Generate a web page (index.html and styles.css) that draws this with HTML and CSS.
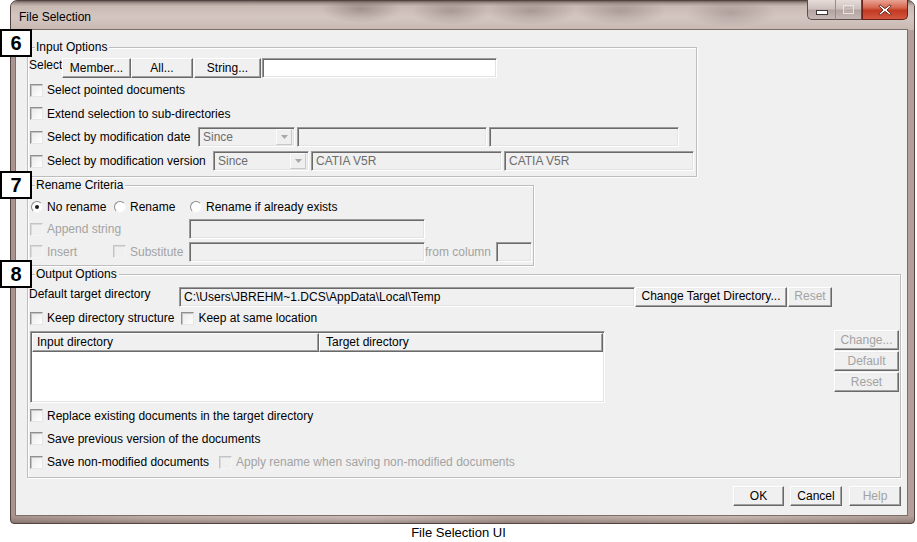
FILE: index.html
```html
<!DOCTYPE html>
<html lang="en">
<head>
<meta charset="utf-8">
<title>File Selection</title>
<link rel="stylesheet" href="styles.css">
</head>
<body>
<div class="page">
  <div class="window">
    <div class="titlebar">
      <span class="title">File Selection</span>
      <div class="capbtns">
        <span class="capbtn cmin"><svg width="12" height="5" viewBox="0 0 12 5"><rect x="0.5" y="0.5" width="11" height="4" fill="#fff" stroke="#3a3636"/></svg></span>
        <span class="capbtn cmax"><svg width="11" height="9" viewBox="0 0 11 9"><rect x="0.5" y="0.5" width="10" height="8" fill="none" stroke="#e9e3e1"/><rect x="2.5" y="2.5" width="6" height="4" fill="none" stroke="#c2b6b2"/></svg></span>
        <span class="capbtn cclose"><svg width="14" height="12" viewBox="0 0 14 12"><path d="M2 0.8 L7 4.6 L12 0.8 L13.2 2 L9 6 L13.2 10 L12 11.2 L7 7.4 L2 11.2 L0.8 10 L5 6 L0.8 2 Z" fill="#fff" stroke="#5a1d16" stroke-width="0.9" stroke-linejoin="round"/></svg></span>
      </div>
    </div>

    <div class="client">
      <section class="group g-input">
        <div class="legend">Input Options</div>
        <div class="row sel-row">
          <span class="sel-lbl">Select</span>
          <button class="btn w-member">Member...</button>
          <button class="btn w-all">All...</button>
          <button class="btn w-string">String...</button>
          <span class="field white w-selstr"></span>
        </div>
        <div class="row h24"><span class="cb"></span><span>Select pointed documents</span></div>
        <div class="row h23"><span class="cb"></span><span>Extend selection to sub-directories</span></div>
        <div class="row h24">
          <span class="cb"></span><span class="lbl-date">Select by modification date</span>
          <span class="combo w-combo1"><span class="ctext">Since</span><span class="carrow"><svg width="7" height="4" viewBox="0 0 7 4"><path d="M0 0 H7 L3.5 4 Z" fill="#a8a8a8"/></svg></span></span>
          <span class="field dis w-f190 ml2"></span>
          <span class="field dis w-f190 ml2"></span>
        </div>
        <div class="row h24">
          <span class="cb"></span><span class="lbl-ver">Select by modification version</span>
          <span class="combo w-combo2"><span class="ctext">Since</span><span class="carrow"><svg width="7" height="4" viewBox="0 0 7 4"><path d="M0 0 H7 L3.5 4 Z" fill="#a8a8a8"/></svg></span></span>
          <span class="field dis w-f191 ml2"><span class="ftext grey">CATIA V5R</span></span>
          <span class="field dis w-f190 ml2"><span class="ftext grey">CATIA V5R</span></span>
        </div>
      </section>

      <section class="group g-rename">
        <div class="legend">Rename Criteria</div>
        <div class="rgrid">
          <div class="gitem"><span class="radio on"></span><span>No rename</span></div>
          <div class="gitem"><span class="radio"></span><span>Rename</span></div>
          <div class="gitem span3"><span class="radio"></span><span>Rename if already exists</span></div>

          <div class="gitem span2 disabled"><span class="cb dcb"></span><span>Append string</span></div>
          <div class="gitem"><span class="field dis fill h20"></span></div>
          <div class="gitem span2"></div>

          <div class="gitem disabled"><span class="cb dcb"></span><span>Insert</span></div>
          <div class="gitem disabled"><span class="cb dcb"></span><span>Substitute</span></div>
          <div class="gitem"><span class="field dis fill h20"></span></div>
          <div class="gitem disabled"><span>from column</span></div>
          <div class="gitem"><span class="field dis fill h20"></span></div>
        </div>
      </section>

      <section class="group g-output">
        <div class="legend">Output Options</div>
        <div class="row dir-row">
          <span class="dir-lbl">Default target directory</span>
          <span class="field dis w-dir"><span class="ftext">C:\Users\JBREHM~1.DCS\AppData\Local\Temp</span></span>
          <button class="btn w-change">Change Target Directory...</button>
          <button class="btn disabled w-reset">Reset</button>
        </div>
        <div class="row h20">
          <span class="cb"></span><span>Keep directory structure</span>
          <span class="cb ml7"></span><span>Keep at same location</span>
        </div>
        <div class="row table-row">
          <div class="table">
            <div class="thead">
              <span class="th th1">Input directory</span>
              <span class="th th2">Target directory</span>
            </div>
          </div>
          <div class="sidebtns">
            <button class="btn disabled w-side">Change...</button>
            <button class="btn disabled w-side">Default</button>
            <button class="btn disabled w-side">Reset</button>
          </div>
        </div>
        <div class="row h23"><span class="cb"></span><span>Replace existing documents in the target directory</span></div>
        <div class="row h23"><span class="cb"></span><span>Save previous version of the documents</span></div>
        <div class="row h24">
          <span class="cb"></span><span class="lbl-save">Save non-modified documents</span>
          <span class="cb dcb ml7"></span><span class="grey-d">Apply rename when saving non-modified documents</span>
        </div>
      </section>

      <div class="footer">
        <button class="btn w-ok">OK</button>
        <button class="btn w-cancel">Cancel</button>
        <button class="btn disabled w-help">Help</button>
      </div>
    </div>
  </div>

  <div class="caption">File Selection UI</div>

  <div class="badge b6">6</div>
  <div class="badge b7">7</div>
  <div class="badge b8">8</div>
</div>
</body>
</html>
```

FILE: styles.css
```css
* { box-sizing: border-box; }

html, body {
  margin: 0;
  padding: 0;
  background: #ffffff;
}

body {
  width: 917px;
  height: 542px;
  overflow: hidden;
  font-family: "Liberation Sans", Arial, sans-serif;
  font-size: 12px;
  color: #000;
}

.page {
  position: relative;
  width: 917px;
  height: 542px;
}

/* ---------- window frame ---------- */
.window {
  margin-left: 10px;
  width: 905px;
  height: 524px;
  display: flex;
  flex-direction: column;
  border: 1px solid #54443f;
  border-radius: 7px 7px 4px 4px;
  padding: 0 7px 8px 5px;
  background:
    linear-gradient(to bottom, rgba(0,0,0,0) 0, rgba(0,0,0,0) 515px, rgba(90,72,68,0.2) 519px, rgba(60,48,45,0.4) 523px),
    linear-gradient(to right, #a8958f 0, #c0aea8 15%, #cfc0bb 40%, #b9a7a1 55%, #cbbab4 80%, #b29f99 100%);
}

.titlebar {
  height: 29px;
  margin: 0 -7px 0 -5px;
  padding-left: 8px;
  display: flex;
  justify-content: space-between;
  align-items: center;
  border-radius: 6px 6px 0 0;
  background:
    radial-gradient(ellipse 40px 14px at 350px 8px, rgba(80,66,62,0.35), rgba(80,66,62,0) 100%),
    radial-gradient(ellipse 40px 14px at 440px 10px, rgba(80,66,62,0.30), rgba(80,66,62,0) 100%),
    radial-gradient(ellipse 45px 14px at 520px 10px, rgba(80,66,62,0.30), rgba(80,66,62,0) 100%),
    radial-gradient(ellipse 45px 14px at 610px 10px, rgba(80,66,62,0.28), rgba(80,66,62,0) 100%),
    radial-gradient(ellipse 45px 14px at 720px 12px, rgba(80,66,62,0.25), rgba(80,66,62,0) 100%),
    linear-gradient(to bottom, #6e605c 0, #a3938e 2px, #c9b9b3 5px, #d3c6c1 16px, #c8b8b2 29px);
}

.title {
  font-size: 12px;
  color: #000;
  margin-top: 3px;
}

.capbtns {
  align-self: flex-start;
  margin-top: -1px;
  margin-right: 6px;
  display: flex;
  height: 20px;
}

.capbtn {
  display: flex;
  align-items: center;
  justify-content: center;
  height: 20px;
  border: 1px solid #5b4e4b;
  border-top: none;
}

.cmin {
  width: 28px;
  border-radius: 0 0 0 5px;
  border-right: none;
  background: linear-gradient(to bottom, #e6dcd9 0, #cfc2be 45%, #b3a4a0 55%, #c6b9b5 100%);
  padding-top: 5px;
}

.cmax {
  width: 27px;
  border-left: 1px solid #9a8c88;
  background: linear-gradient(to bottom, #e6dcd9 0, #cfc2be 45%, #b3a4a0 55%, #c6b9b5 100%);
}

.cclose {
  width: 46px;
  border-radius: 0 0 5px 0;
  border-color: #6b1f17;
  background: linear-gradient(to bottom, #e9a395 0, #d6674f 40%, #c23a22 55%, #d3573f 100%);
}

/* ---------- client area ---------- */
.client {
  flex: none;
  height: 485px;
  background: #f0f0f0;
  box-shadow: 0 0 0 1px #7d6e69;
  padding: 17px 6px 0 11px;
  display: flex;
  flex-direction: column;
}

.group {
  border: 1px solid #bdbdbd;
  box-shadow: inset 1px 1px #ffffff, 1px 1px #ffffff;
  padding: 0 0 3px 2px;
}

.g-input { width: 670px; }
.g-rename { width: 507px; margin-top: 8px; padding-bottom: 2px; }
.g-output { width: 874px; margin-top: 8px; }

.legend {
  width: max-content;
  height: 14px;
  line-height: 14px;
  margin: -8px 0 0 5px;
  padding: 0 2px 0 1px;
  background: #f0f0f0;
}

.row {
  display: flex;
  align-items: center;
  white-space: nowrap;
}

.h20 { height: 20px; }
.h23 { height: 23px; }
.h24 { height: 24px; }

.ml2 { margin-left: 2px; }
.ml7 { margin-left: 7px; }

.lbl-date { width: 146px; }
.lbl-ver { width: 161px; }
.lbl-save { width: 165px; }

/* ---------- checkboxes & radios ---------- */
.cb {
  flex: none;
  width: 13px;
  height: 13px;
  margin-right: 4px;
  border: 1px solid;
  border-color: #8f8f8f #e6e6e6 #e6e6e6 #8f8f8f;
  box-shadow: inset 1px 1px #c4c4c4;
  background: linear-gradient(135deg, #e9e9e9, #ffffff);
}

.dcb {
  border-color: #c4c4c4 #f4f4f4 #f4f4f4 #c4c4c4;
  box-shadow: inset 1px 1px #dadada;
  background: #f0f0f0;
}

.radio {
  flex: none;
  width: 12px;
  height: 12px;
  margin: 0 4px 0 1px;
  border-radius: 50%;
  border: 1px solid;
  border-color: #8a8a8a #f4f4f4 #f4f4f4 #8a8a8a;
  background: #ffffff;
  position: relative;
}

.radio.on::after {
  content: "";
  position: absolute;
  left: 3px;
  top: 3px;
  width: 4px;
  height: 4px;
  border-radius: 50%;
  background: #1a1a1a;
}

/* ---------- buttons ---------- */
.btn {
  flex: none;
  height: 20px;
  padding: 0;
  margin: 0;
  font-family: inherit;
  font-size: 12px;
  color: #000;
  background: #f0f0f0;
  border: 1px solid;
  border-color: #ffffff #696969 #696969 #ffffff;
  box-shadow: inset -1px -1px #a0a0a0, inset 1px 1px #ececec;
  text-align: center;
  line-height: 17px;
}

.btn.disabled { color: #a3a3a3; }

.w-member { width: 69px; }
.w-all { width: 62px; }
.w-string { width: 67px; margin-left: 1px; }
.w-change { width: 152px; }
.w-reset { width: 44px; margin-left: 1px; }
.w-side { width: 65px; }
.w-ok { width: 51px; }
.w-cancel { width: 52px; margin-left: 6px; }
.w-help { width: 52px; margin-left: 7px; }

/* ---------- fields & combos ---------- */
.field {
  flex: none;
  display: flex;
  align-items: center;
  height: 20px;
  border: 1px solid;
  border-color: #9b9b9b #ffffff #ffffff #9b9b9b;
  box-shadow: inset 1px 1px #6a6a6a, inset -1px -1px #e3e3e3;
  overflow: hidden;
}

.field.white { background: #ffffff; }
.field.dis { background: #f0f0f0; }
.field.fill { width: 100%; }

.ftext {
  padding-left: 4px;
  white-space: nowrap;
}

.grey { color: #6d6d6d; }
.grey-d { color: #a3a3a3; }

.w-selstr { width: 235px; margin-left: 1px; }
.w-f190 { width: 190px; }
.w-f191 { width: 191px; }
.w-dir { width: 456px; }

.combo {
  flex: none;
  display: flex;
  align-items: center;
  justify-content: space-between;
  height: 20px;
  margin-left: 5px;
  padding: 2px 2px 2px 0;
  border: 1px solid;
  border-color: #9b9b9b #ffffff #ffffff #9b9b9b;
  box-shadow: inset 1px 1px #6a6a6a, inset -1px -1px #e3e3e3;
  background: #f0f0f0;
  color: #6d6d6d;
}

.w-combo1 { width: 97px; }
.w-combo2 { width: 96px; }

.ctext { padding-left: 4px; }

.carrow {
  width: 16px;
  height: 16px;
  display: flex;
  align-items: center;
  justify-content: center;
  border: 1px solid;
  border-color: #fbfbfb #c9c9c9 #c9c9c9 #fbfbfb;
  background: #efefef;
}

/* ---------- input options ---------- */
.sel-row {
  margin-top: 4px;
  height: 20px;
  align-items: flex-start;
}

.sel-lbl {
  width: 33px;
  margin-left: -1px;
  line-height: 15px;
}

/* ---------- rename criteria ---------- */
.rgrid {
  margin-top: 4px;
  display: grid;
  grid-template-columns: 83px 76px 236px 71px 36px;
  grid-template-rows: 22px 22px 23px;
}

.gitem {
  display: flex;
  align-items: center;
  white-space: nowrap;
}

.span2 { grid-column: span 2; }
.span3 { grid-column: span 3; }

.disabled { color: #a3a3a3; }

/* ---------- output options ---------- */
.dir-row {
  margin-top: 4px;
  height: 23px;
}

.dir-lbl {
  width: 150px;
  margin-left: -1px;
  align-self: flex-start;
  line-height: 16px;
  margin-top: 1px;
}

.table-row {
  height: 76px;
  align-items: flex-start;
  justify-content: space-between;
  padding-right: 1px;
}

.table {
  width: 575px;
  height: 72px;
  margin-top: 3px;
  background: #ffffff;
  border: 1px solid;
  border-color: #9b9b9b #ffffff #ffffff #9b9b9b;
  box-shadow: inset 1px 1px #6a6a6a, inset -1px -1px #e3e3e3;
  padding: 1px 1px 0 1px;
}

.thead {
  display: flex;
  height: 19px;
}

.th {
  height: 19px;
  line-height: 17px;
  padding-left: 4px;
  background: #f0f0f0;
  border: 1px solid;
  border-color: #ffffff #696969 #696969 #ffffff;
  box-shadow: inset -1px -1px #a0a0a0;
}

.th1 { width: 287px; }
.th2 { flex: 1; padding-left: 6px; }

.sidebtns {
  margin-top: 2px;
  display: flex;
  flex-direction: column;
  gap: 1px;
}

/* ---------- footer ---------- */
.footer {
  margin-top: 8px;
  display: flex;
  justify-content: flex-end;
}

/* ---------- caption & badges ---------- */
.caption {
  text-align: center;
  font-family: "Liberation Sans", Arial, sans-serif;
  font-size: 13px;
  line-height: 16px;
  margin-top: 1px;
}

.badge {
  position: absolute;
  left: 0;
  width: 32px;
  height: 28px;
  border: 2px solid #000;
  background: #fff;
  font-family: "Liberation Sans", Arial, sans-serif;
  font-weight: bold;
  font-size: 20px;
  line-height: 24px;
  text-align: center;
}

.b6 { top: 29px; }
.b7 { top: 171px; }
.b8 { top: 260px; }
```
